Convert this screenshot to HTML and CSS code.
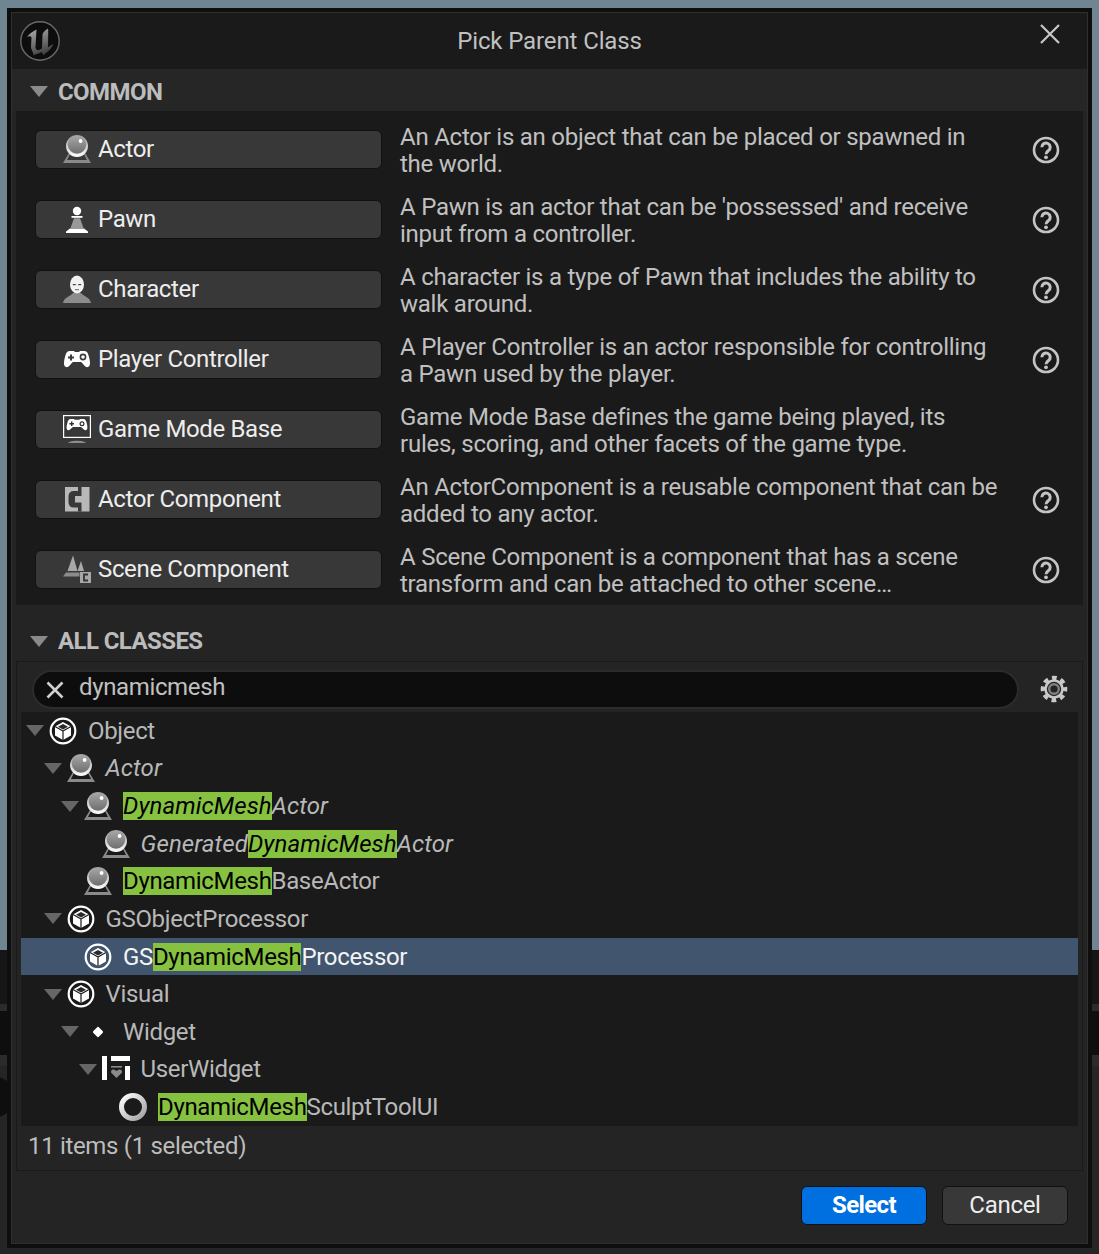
FILE: index.html
```html
<!DOCTYPE html>
<html lang="en">
<head>
<meta charset="utf-8">
<title>Pick Parent Class</title>
<link rel="stylesheet" href="styles.css">
</head>
<body>
<svg class="defs" aria-hidden="true">
  <defs>
    <linearGradient id="rim" x1="0" y1="0" x2="0" y2="1"><stop offset="0" stop-color="#9a9a9a"/><stop offset="1" stop-color="#fff"/></linearGradient>
    <linearGradient id="ball" x1="0" y1="0" x2="0" y2="1"><stop offset="0" stop-color="#a8a8a8"/><stop offset="1" stop-color="#6e6e6e"/></linearGradient>
    <linearGradient id="logoU" x1="0" y1="0" x2="0.4" y2="1"><stop offset="0" stop-color="#b4b4b4"/><stop offset="1" stop-color="#444"/></linearGradient>
    <linearGradient id="ringG" x1="0" y1="0" x2="1" y2="1"><stop offset="0" stop-color="#fff"/><stop offset="1" stop-color="#a0a0a0"/></linearGradient>
    <symbol id="i-tri" viewBox="0 0 18 11"><path d="M0 0H18L9 11Z"/></symbol>
    <symbol id="i-actor" viewBox="0 0 28 28">
      <path d="M6 18L0 28H28L22 18H20.5L24 25H4L7.5 18Z" fill="#8a8a8a"/>
      <circle cx="14" cy="11" r="11" fill="url(#rim)"/>
      <circle cx="14" cy="9.6" r="9.2" fill="url(#ball)"/>
      <circle cx="17.6" cy="6" r="1.9" fill="#fff"/>
    </symbol>
    <symbol id="i-pawn" viewBox="0 0 28 28">
      <circle cx="14" cy="6" r="4.2" fill="#fff"/>
      <rect x="8.5" y="11" width="11" height="1.8" fill="#fff"/>
      <path d="M11 13.2H17L20.5 23H7.5Z" fill="#999"/>
      <path d="M7 23.6H21L25 26.5V28H3V26.5Z" fill="#fff"/>
    </symbol>
    <symbol id="i-char" viewBox="0 0 28 28">
      <path d="M0 28C1 22 8 21 10 18H18C20 21 27 22 28 28Z" fill="#8c8c8c"/>
      <ellipse cx="14" cy="9.5" rx="7" ry="9" fill="#f2f2f2"/>
      <rect x="9.8" y="9" width="3" height="1.2" fill="#444"/>
      <rect x="15.2" y="9" width="3" height="1.2" fill="#444"/>
      <rect x="12" y="14.2" width="4" height="1" fill="#666"/>
    </symbol>
    <symbol id="i-pad" viewBox="0 0 28 28">
      <path d="M7 6C4 6 3 8 2 12C1 16 0 21 3 22C6 23 8 18 10 17H18C20 18 22 23 25 22C28 21 27 16 26 12C25 8 24 6 21 6H17L16 7H12L11 6Z" fill="#fff"/>
      <path d="M7 9.5H9V11.5H11V13.5H9V15.5H7V13.5H5V11.5H7Z" fill="#3a3a3a"/>
      <circle cx="20" cy="12" r="2.6" fill="none" stroke="#3a3a3a" stroke-width="1.6"/>
    </symbol>
    <symbol id="i-mode" viewBox="0 0 28 28">
      <rect x="0.6" y="0.6" width="26.8" height="21.8" fill="none" stroke="#fff" stroke-width="1.2"/>
      <path d="M7.5 4C5.5 4 5 5.5 4.2 8.5C3.6 11 3 14.500 5 15.200C7 16 8.500 12.500 10 12H18C19.500 12.500 21 16 23 15.200C25 14.500 24.400 11 23.800 8.500C23 5.500 22.500 4 20.500 4H17L16.400 4.800H11.600L11 4Z" fill="#fff"/>
      <path d="M8 6.500H9.400V8H11V9.400H9.400V11H8V9.400H6.400V8H8Z" fill="#333"/>
      <circle cx="19" cy="8.700" r="1.900" fill="none" stroke="#333" stroke-width="1.200"/>
      <path d="M5 28C7 25 21 25 23 28Z" fill="#8c8c8c"/>
    </symbol>
    <symbol id="i-comp" viewBox="0 0 28 28">
      <rect x="2" y="2" width="24.500" height="24.500" fill="#b8b8b8"/>
      <path d="M15 2H18.500V11H12V17.500H18.500V26.500H15V22.500H11Q5.500 22.500 5.500 17V11.500Q5.500 6 11 6H15Z" fill="#383838"/>
    </symbol>
    <symbol id="i-scene" viewBox="0 0 28 28">
      <path d="M4.500 16L10 0.500L14.500 16Z" fill="#a8a8a8"/>
      <path d="M14.500 16L18 6L21 16Z" fill="#a8a8a8"/>
      <path d="M3 17.500H16.500V21.500H0Z" fill="#8c8c8c"/>
      <rect x="17" y="17" width="11" height="11" fill="#a8a8a8"/>
      <path d="M25 19.500H21V25.500H25" fill="none" stroke="#333" stroke-width="1.800"/>
    </symbol>
    <symbol id="i-obj" viewBox="0 0 28 28">
      <circle cx="14" cy="14" r="12.300" fill="none" stroke="#fff" stroke-width="2.200"/>
      <path d="M14 5L22 9.500V18.500L14 23L6 18.500V9.500Z" fill="#fff"/>
      <path d="M14 7L19 9.800L14 12.600L9 9.800Z" fill="#2a2a2a"/>
      <path d="M14 14V23M14 14L6 9.500M14 14L22 9.500" stroke="#1a1a1a" stroke-width="1.200" fill="none"/>
    </symbol>
    <symbol id="i-widget" viewBox="0 0 28 28">
      <rect x="10" y="10" width="8" height="8" rx="1.500" fill="#fff" transform="rotate(45 14 14)"/>
    </symbol>
    <symbol id="i-user" viewBox="0 0 28 28">
      <rect x="0" y="1" width="5" height="24" fill="#fff"/>
      <rect x="9" y="1" width="19" height="5" fill="#fff"/>
      <rect x="23" y="11" width="5" height="14" fill="#fff"/>
      <rect x="9" y="11" width="11" height="1.600" fill="#8a8a8a"/>
      <path d="M14.500 23L9 17.500Q9 14 12 14.500L14.500 16L17 14.500Q20 14 20 17.500Z" fill="#8a8a8a"/>
    </symbol>
    <symbol id="i-ring" viewBox="0 0 28 28">
      <circle cx="14" cy="14" r="11.500" fill="none" stroke="url(#ringG)" stroke-width="5"/>
    </symbol>
    <symbol id="i-help" viewBox="0 0 28 28">
      <circle cx="14" cy="14" r="12" fill="none" stroke="#c4c4c4" stroke-width="2.600"/>
      <path d="M9.800 11.200A4.200 4.200 0 1 1 16.500 14.600C14.800 15.700 14 16.200 14 18.200" fill="none" stroke="#c4c4c4" stroke-width="3"/>
      <circle cx="14" cy="21.300" r="1.900" fill="#c4c4c4"/>
    </symbol>
  </defs>
</svg>

<main class="window">
  <header class="titlebar">
    <svg class="logo" viewBox="0 0 40 40">
      <circle cx="20" cy="20" r="19.200" fill="#0d0d0d" stroke="#6a6a6a" stroke-width="1.400"/>
      <path d="M7 16C9 13 12 11 16.500 8.500L15.500 26C15.500 28.500 17 29.500 19 29L22 27.500L22.500 14C22.500 12 24 10 28 7.500C28.500 10 28.200 12 28.200 14L28 26.500L33 23C32 27 28 31 23.500 34L21.500 31C18 33 15.500 33 13.500 34.500C13.500 31 11 29 11 26L11.500 17C11.500 15 9 15 7 16Z" fill="url(#logoU)"/>
    </svg>
    <h1 class="title">Pick Parent Class</h1>
    <svg class="close" viewBox="0 0 20 20"><path d="M1 1L19 19M19 1L1 19" stroke="#c8c8c8" stroke-width="2.200" fill="none"/></svg>
  </header>

  <section class="common">
    <h2 class="sect-head common-head"><svg class="sect-tri"><use href="#i-tri"/></svg>COMMON</h2>
    <div class="common-list">
      <div class="c-row">
        <button class="c-btn"><svg class="c-icon"><use href="#i-actor"/></svg>Actor</button>
        <p class="c-desc">An Actor is an object that can be placed or spawned in the world.</p>
        <svg class="help"><use href="#i-help"/></svg>
      </div>
      <div class="c-row">
        <button class="c-btn"><svg class="c-icon"><use href="#i-pawn"/></svg>Pawn</button>
        <p class="c-desc">A Pawn is an actor that can be 'possessed' and receive input from a controller.</p>
        <svg class="help"><use href="#i-help"/></svg>
      </div>
      <div class="c-row">
        <button class="c-btn"><svg class="c-icon"><use href="#i-char"/></svg>Character</button>
        <p class="c-desc">A character is a type of Pawn that includes the ability to walk around.</p>
        <svg class="help"><use href="#i-help"/></svg>
      </div>
      <div class="c-row">
        <button class="c-btn"><svg class="c-icon"><use href="#i-pad"/></svg>Player Controller</button>
        <p class="c-desc">A Player Controller is an actor responsible for controlling a Pawn used by the player.</p>
        <svg class="help"><use href="#i-help"/></svg>
      </div>
      <div class="c-row">
        <button class="c-btn"><svg class="c-icon"><use href="#i-mode"/></svg>Game Mode Base</button>
        <p class="c-desc">Game Mode Base defines the game being played, its rules, scoring, and other facets of the game type.</p>
      </div>
      <div class="c-row">
        <button class="c-btn"><svg class="c-icon"><use href="#i-comp"/></svg>Actor Component</button>
        <p class="c-desc">An ActorComponent is a reusable component that can be added to any actor.</p>
        <svg class="help"><use href="#i-help"/></svg>
      </div>
      <div class="c-row">
        <button class="c-btn"><svg class="c-icon"><use href="#i-scene"/></svg>Scene Component</button>
        <p class="c-desc">A Scene Component is a component that has a scene transform and can be attached to other scene…</p>
        <svg class="help"><use href="#i-help"/></svg>
      </div>
    </div>
  </section>

  <section class="all">
    <h2 class="sect-head all-head"><svg class="sect-tri"><use href="#i-tri"/></svg>ALL CLASSES</h2>
    <div class="panel">
      <div class="search-row">
        <div class="search">
          <svg class="clear" viewBox="0 0 18 18"><path d="M1.500 1.500L16.500 16.500M16.500 1.500L1.500 16.500" stroke="#d0d0d0" stroke-width="2.600" fill="none"/></svg>
          <span class="search-text">dynamicmesh</span>
        </div>
        <svg class="gear" viewBox="0 0 28 28">
          <circle cx="14" cy="14" r="11" fill="none" stroke="#c8c8c8" stroke-width="4.600" stroke-dasharray="4.640 4" stroke-dashoffset="2.320"/>
          <circle cx="14" cy="14" r="8.500" fill="none" stroke="#c8c8c8" stroke-width="2.600"/>
          <circle cx="14" cy="14" r="4.800" fill="none" stroke="#808080" stroke-width="2.400"/>
        </svg>
      </div>
      <div class="tree">
        <div class="t-row l0"><svg class="t-tri"><use href="#i-tri"/></svg><svg class="t-icon"><use href="#i-obj"/></svg><span class="t-text">Object</span></div>
        <div class="t-row l1"><svg class="t-tri"><use href="#i-tri"/></svg><svg class="t-icon"><use href="#i-actor"/></svg><span class="t-text it">Actor</span></div>
        <div class="t-row l2"><svg class="t-tri"><use href="#i-tri"/></svg><svg class="t-icon"><use href="#i-actor"/></svg><span class="t-text it"><mark>DynamicMesh</mark>Actor</span></div>
        <div class="t-row l3"><span class="t-tri"></span><svg class="t-icon"><use href="#i-actor"/></svg><span class="t-text it">Generated<mark>DynamicMesh</mark>Actor</span></div>
        <div class="t-row l2"><span class="t-tri"></span><svg class="t-icon"><use href="#i-actor"/></svg><span class="t-text"><mark>DynamicMesh</mark>BaseActor</span></div>
        <div class="t-row l1"><svg class="t-tri"><use href="#i-tri"/></svg><svg class="t-icon"><use href="#i-obj"/></svg><span class="t-text">GSObjectProcessor</span></div>
        <div class="t-row l2 sel"><span class="t-tri"></span><svg class="t-icon"><use href="#i-obj"/></svg><span class="t-text">GS<mark>DynamicMesh</mark>Processor</span></div>
        <div class="t-row l1"><svg class="t-tri"><use href="#i-tri"/></svg><svg class="t-icon"><use href="#i-obj"/></svg><span class="t-text">Visual</span></div>
        <div class="t-row l2"><svg class="t-tri"><use href="#i-tri"/></svg><svg class="t-icon"><use href="#i-widget"/></svg><span class="t-text">Widget</span></div>
        <div class="t-row l3"><svg class="t-tri"><use href="#i-tri"/></svg><svg class="t-icon"><use href="#i-user"/></svg><span class="t-text">UserWidget</span></div>
        <div class="t-row l4"><span class="t-tri"></span><svg class="t-icon"><use href="#i-ring"/></svg><span class="t-text"><mark>DynamicMesh</mark>SculptToolUI</span></div>
      </div>
      <div class="status">11 items (1 selected)</div>
    </div>
  </section>

  <footer class="footer">
    <button class="act primary">Select</button>
    <button class="act">Cancel</button>
  </footer>
</main>
</body>
</html>
```
FILE: styles.css
```css
* { box-sizing: border-box; }
html, body { margin: 0; height: 100%; }
body {
  width: 1099px;
  height: 1254px;
  overflow: hidden;
  padding: 8px 7px 6px;
  font-family: Roboto, "Liberation Sans", sans-serif;
  font-size: 24px;
  color: #c0c0c0;
  background:
    radial-gradient(circle at -6px 1097px, #0e0e0e 0 20px, transparent 21px),
    linear-gradient(to bottom,
      #6f8592 0 950px, #161616 950px 1004px, #2b2b2b 1004px 1011px,
      #0e0e0e 1011px 1055px, #2b2b2b 1055px 1066px, #252525 1066px);
}
.defs { position: absolute; width: 0; height: 0; }

.window {
  height: 1240px;
  border: 4px solid #0e0e0e;
  background: #242424;
  box-shadow: inset 0 0 0 1px #2f2f2f;
  padding: 1px;
  display: flex;
  flex-direction: column;
}

.titlebar {
  height: 56px;
  background: #1a1a1a;
  display: flex;
  align-items: center;
  justify-content: center;
  position: relative;
}
.logo { position: absolute; left: 8px; top: 8px; width: 40px; height: 40px; }
.close { position: absolute; right: 27px; top: 11px; width: 20px; height: 20px; }
.title { margin: 0; font-size: 24px; font-weight: 400; color: #c0c0c0; line-height: 56px; letter-spacing: -0.12px; }

.sect-head {
  margin: 0;
  height: 42px;
  padding-left: 18px;
  display: flex;
  align-items: center;
  gap: 10px;
  font-size: 24px;
  font-weight: 700;
  letter-spacing: -0.58px;
  color: #bcbcbc;
  background: #262626;
}
.common-head { padding-top: 3px; }
.sect-tri { width: 18px; height: 11px; fill: #8a8a8a; }

.common-list {
  margin: 0 4px;
  padding-top: 4px;
  height: 494px;
  background: #1a1a1a;
}
.c-row {
  height: 70px;
  padding-left: 19px;
  display: flex;
  align-items: center;
}
.c-btn {
  flex: none;
  width: 347px;
  height: 39px;
  margin-top: -1px;
  padding: 0 0 2px 27px;
  display: flex;
  align-items: center;
  gap: 7px;
  font: 24px Roboto, "Liberation Sans", sans-serif;
  letter-spacing: -0.35px;
  color: #ededed;
  background: #383838;
  border: 1px solid #111;
  border-radius: 6px;
}
.c-icon { width: 28px; height: 28px; flex: none; }
.c-desc {
  margin: 2px 0 0 18px;
  width: 600px;
  line-height: 27px;
  letter-spacing: -0.24px;
  color: #c0c0c0;
}
.help { width: 28px; height: 28px; margin-left: 32px; flex: none; }

.all-head {
  height: 56px;
  padding-top: 16px;
  background: #242424;
}
.panel {
  margin: 0 4px;
  height: 510px;
  border: 1px solid #1a1a1a;
  display: flex;
  flex-direction: column;
}
.search-row {
  height: 50px;
  padding: 8px 15px 3px;
  display: flex;
  gap: 22px;
  align-items: flex-start;
}
.search {
  flex: 1;
  height: 39px;
  padding-left: 12px;
  display: flex;
  align-items: center;
  gap: 15px;
  background: #0d0d0d;
  border: 2px solid #2c2c2c;
  border-radius: 20px;
}
.search-text { color: #c0c0c0; letter-spacing: -0.36px; padding-bottom: 5px; }
.clear { width: 18px; height: 18px; }
.gear { width: 28px; height: 28px; margin: 5px -1px 0; }

.tree {
  margin: 0 4px;
  height: 414px;
  background: #1a1a1a;
}
.t-row {
  height: 37.636px;
  display: flex;
  align-items: center;
  white-space: nowrap;
}
.l0 { padding-left: 5px; }
.l1 { padding-left: 22.5px; }
.l2 { padding-left: 40px; }
.l3 { padding-left: 57.5px; }
.l4 { padding-left: 75px; }
.t-tri { width: 18px; height: 11px; margin-right: 4px; fill: #666; flex: none; }
.t-icon { width: 28px; height: 28px; margin: 0 1px; flex: none; }
.t-text { margin-left: 10px; color: #b8b8b8; letter-spacing: -0.33px; }
.it { font-style: italic; letter-spacing: 0.1px; }
mark { background: #86c240; color: #000; }
.sel { background: #41566e; }
.sel .t-text { color: #f4f4f4; }

.status {
  flex: 1;
  padding: 0 0 4px 11px;
  display: flex;
  align-items: center;
  letter-spacing: -0.33px;
  color: #bcbcbc;
}

.footer {
  flex: 1;
  padding: 15px 19px 0 0;
  display: flex;
  justify-content: flex-end;
  align-items: flex-start;
  gap: 15px;
}
.act {
  width: 126px;
  height: 39px;
  padding: 0 0 2px;
  font: 24px Roboto, "Liberation Sans", sans-serif;
  letter-spacing: -0.3px;
  color: #ededed;
  background: #383838;
  border: 1px solid #111;
  border-radius: 6px;
}
.primary { background: #0070e0; color: #fff; font-weight: 700; letter-spacing: -0.6px; }
```
